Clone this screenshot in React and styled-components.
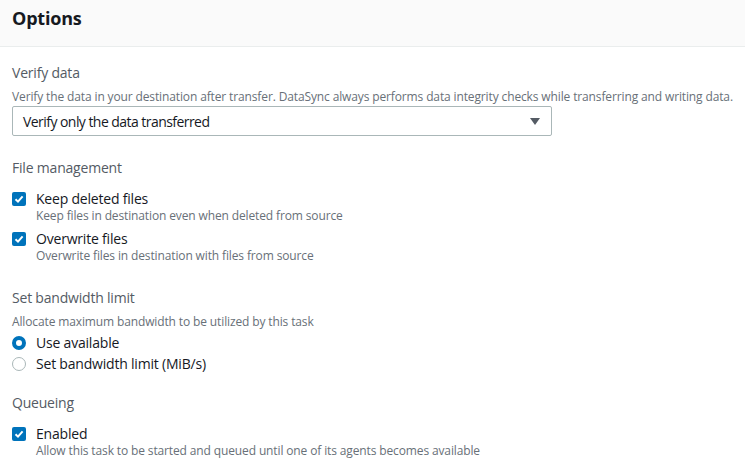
import React from 'react'
import styled, { createGlobalStyle } from 'styled-components'

const GlobalStyle = createGlobalStyle`
  body {
    margin: 0;
    background: #fff;
    font-family: 'Open Sans', 'Noto Sans', sans-serif;
    color: #16191f;
  }
`

const Panel = styled.div`
  width: 745px;
  height: 466px;
  overflow: hidden;
  background: #fff;
`

const Header = styled.header`
  height: 47px;
  box-sizing: border-box;
  padding: 6px 12px 0;
  background: #fafafa;
  border-bottom: 1px solid #eaeded;
`

const Title = styled.h2`
  margin: 0;
  font-size: 18px;
  font-weight: 700;
  line-height: 24px;
  color: #16191f;
  letter-spacing: -0.2px;
`

const Body = styled.div`
  padding: 16px 12px 0;
  display: flex;
  flex-direction: column;
`

const Section = styled.section`
  display: flex;
  flex-direction: column;
  margin-bottom: ${(p) => p.gap || 20}px;
`

const Label = styled.div`
  font-size: 14px;
  line-height: 20px;
  color: #545b64;
  letter-spacing: -0.2px;
`

const Description = styled.div`
  font-size: 12px;
  line-height: 16px;
  color: #687078;
  letter-spacing: -0.13px;
  margin-top: ${(p) => p.top ?? 4}px;
`

const Select = styled.div`
  width: 540px;
  height: 30px;
  box-sizing: border-box;
  margin-top: 1px;
  padding: 0 11px 0 10px;
  display: flex;
  align-items: center;
  justify-content: space-between;
  border: 1px solid #aab7b8;
  border-radius: 2px;
  font-size: 14px;
  color: #16191f;
  letter-spacing: -0.55px;
`

const Caret = styled.span`
  width: 0;
  height: 0;
  border-left: 5px solid transparent;
  border-right: 5px solid transparent;
  border-top: 7px solid #545b64;
`

const OptionList = styled.div`
  display: flex;
  flex-direction: column;
  gap: ${(p) => p.gap || 0}px;
  margin-top: ${(p) => p.top || 0}px;
`

const OptionRow = styled.div`
  display: grid;
  grid-template-columns: 14px 1fr;
  column-gap: 10px;
  align-items: start;
`

const OptionText = styled.div`
  display: flex;
  flex-direction: column;
`

const OptionLabel = styled.span`
  font-size: 14px;
  line-height: 18px;
  color: #16191f;
  letter-spacing: -0.2px;
`

const Check = styled.span`
  margin-top: 2px;
  width: 14px;
  height: 14px;
  border-radius: 2px;
  background: #0073bb;
  display: flex;
  align-items: center;
  justify-content: center;
`

const Radio = styled.span`
  margin-top: 2px;
  width: 14px;
  height: 14px;
  box-sizing: border-box;
  border-radius: 50%;
  border: ${(p) => (p.checked ? '4px solid #0073bb' : '1px solid #aab7b8')};
  background: #fff;
`

const Checkbox = () => (
  <Check>
    <svg width="10" height="10" viewBox="0 0 10 10">
      <path d="M1.5 5.2 L4 7.6 L8.6 2.4" fill="none" stroke="#fff" strokeWidth="2" />
    </svg>
  </Check>
)

const CheckOption = ({ label, description }) => (
  <OptionRow>
    <Checkbox />
    <OptionText>
      <OptionLabel>{label}</OptionLabel>
      <Description top={0}>{description}</Description>
    </OptionText>
  </OptionRow>
)

const RadioOption = ({ label, checked }) => (
  <OptionRow>
    <Radio checked={checked} />
    <OptionLabel>{label}</OptionLabel>
  </OptionRow>
)

export default function App() {
  return (
    <Panel>
      <GlobalStyle />
      <Header>
        <Title>Options</Title>
      </Header>
      <Body>
        <Section gap={22}>
          <Label>Verify data</Label>
          <Description top={6}>
            Verify the data in your destination after transfer. DataSync always performs data integrity checks while
            transferring and writing data.
          </Description>
          <Select>
            <span>Verify only the data transferred</span>
            <Caret />
          </Select>
        </Section>
        <Section gap={24}>
          <Label>File management</Label>
          <OptionList top={12} gap={6}>
            <CheckOption label="Keep deleted files" description="Keep files in destination even when deleted from source" />
            <CheckOption label="Overwrite files" description="Overwrite files in destination with files from source" />
          </OptionList>
        </Section>
        <Section gap={20}>
          <Label>Set bandwidth limit</Label>
          <Description top={6}>Allocate maximum bandwidth to be utilized by this task</Description>
          <OptionList top={4} gap={3}>
            <RadioOption label="Use available" checked />
            <RadioOption label="Set bandwidth limit (MiB/s)" />
          </OptionList>
        </Section>
        <Section>
          <Label>Queueing</Label>
          <OptionList top={12}>
            <CheckOption
              label="Enabled"
              description="Allow this task to be started and queued until one of its agents becomes available"
            />
          </OptionList>
        </Section>
      </Body>
    </Panel>
  )
}
